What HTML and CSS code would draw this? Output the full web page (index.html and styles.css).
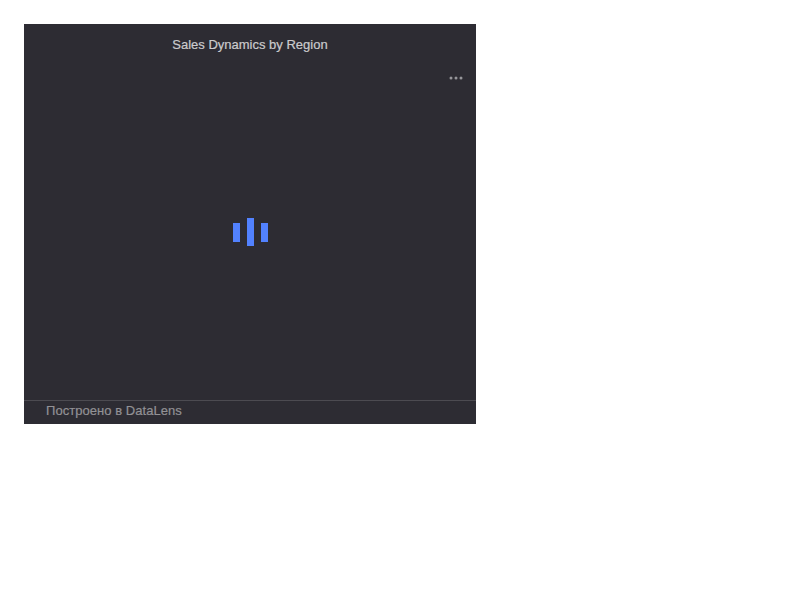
FILE: index.html
```html
<!DOCTYPE html>
<html lang="en">
<head>
<meta charset="utf-8">
<title>Sales Dynamics by Region</title>
<link rel="stylesheet" href="styles.css">
</head>
<body>
<div class="widget">
  <header class="title">Sales Dynamics by Region</header>
  <div class="toolbar">
    <svg class="menu-icon" width="16" height="16" viewBox="0 0 16 16"><circle cx="3" cy="8" r="1.5"/><circle cx="8" cy="8" r="1.5"/><circle cx="13" cy="8" r="1.5"/></svg>
  </div>
  <div class="content">
    <div class="loader"><span class="bar"></span><span class="bar bar-tall"></span><span class="bar"></span></div>
  </div>
  <footer class="footer">Построено в DataLens</footer>
</div>
</body>
</html>
```

FILE: styles.css
```css
body {
  margin: 24px;
  background: #fff;
  font-family: "Liberation Sans", Arial, sans-serif;
  font-size: 13px;
}
.widget {
  box-sizing: border-box;
  display: flex;
  flex-direction: column;
  width: 452px;
  height: 400px;
  padding-bottom: 4px;
  background: #2d2c33;
}
.title {
  height: 40px;
  line-height: 42px;
  text-align: center;
  color: #cbcbcd;
  -webkit-text-stroke: 0.2px #cbcbcd;
}
.toolbar {
  display: flex;
  justify-content: flex-end;
  height: 24px;
  padding: 6px 12px 0;
}
.menu-icon {
  fill: #96969a;
}
.content {
  flex: 1;
  display: flex;
  justify-content: center;
  padding-top: 124px;
}
.loader {
  display: flex;
  align-items: center;
  gap: 7px;
  height: 28px;
}
.bar {
  width: 7px;
  height: 19px;
  background: #5282ff;
}
.bar-tall {
  height: 28px;
}
.footer {
  height: 19px;
  line-height: 19px;
  padding-left: 22px;
  border-top: 1px solid #4c4b51;
  color: #929195;
  letter-spacing: 0.05px;
  -webkit-text-stroke: 0.2px #929195;
}
```
